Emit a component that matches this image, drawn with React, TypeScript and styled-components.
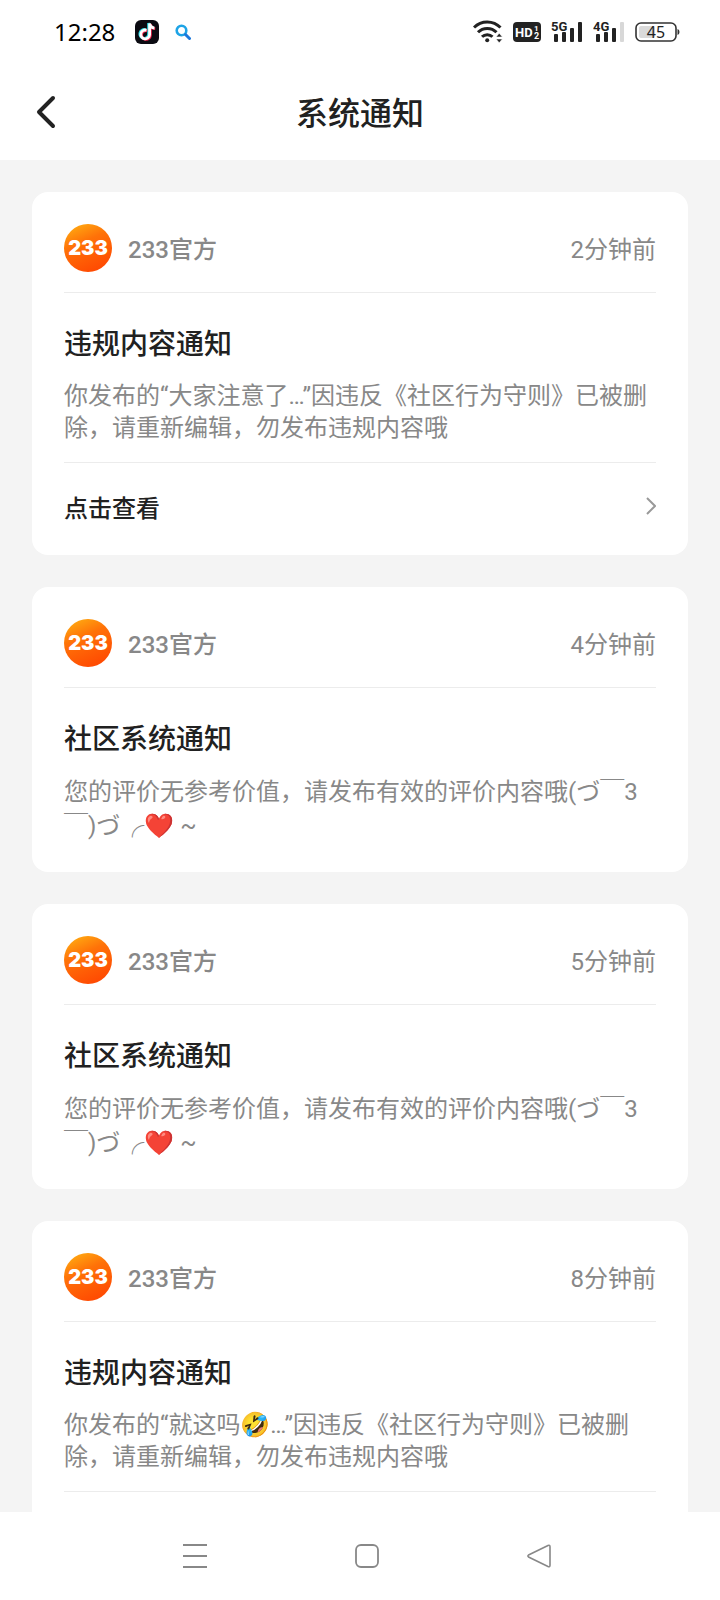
import React from "react";
import styled, { createGlobalStyle } from "styled-components";

const GlobalStyle = createGlobalStyle`
  * { box-sizing: border-box; }
  body {
    margin: 0;
    background: #f4f4f4;
    font-family: Roboto, "Noto Sans CJK SC", "Noto Color Emoji", sans-serif;
    color: #212121;
  }
  button { border: 0; padding: 0; background: none; color: inherit; font: inherit; cursor: pointer; }
  svg { display: block; flex: none; }
  h1, h2, p { margin: 0; }
`;

const Screen = styled.div`
  display: flex;
  flex-direction: column;
  height: 100vh;
`;

const StatusBar = styled.div`
  display: flex;
  align-items: center;
  justify-content: space-between;
  height: 64px;
  padding: 0 40px 0 54px;
  background: #fff;
`;

const StatusGroup = styled.div<{ $gap: number }>`
  display: flex;
  align-items: center;
  gap: ${(p) => p.$gap}px;
`;

const Clock = styled.time`
  margin-right: 4px;
  font: 400 24px/32px "Noto Sans", sans-serif;
  color: #000;
`;

const Header = styled.header`
  display: grid;
  grid-template-columns: 48px 1fr 48px;
  align-items: center;
  height: 96px;
  padding: 0 32px;
  background: #fff;
`;

const BackButton = styled.button`
  display: flex;
  align-items: center;
  height: 48px;
`;

const PageTitle = styled.h1`
  padding-top: 4px;
  font-size: 32px;
  line-height: 48px;
  font-weight: 500;
  text-align: center;
`;

const List = styled.main`
  flex: 1;
  min-height: 0;
  display: flex;
  flex-direction: column;
  gap: 32px;
  padding: 32px;
  overflow-y: auto;
  scrollbar-width: none;
`;

const Card = styled.article`
  flex: none;
  padding: 32px 32px 0;
  border-radius: 16px;
  background: #fff;
`;

const CardHead = styled.div`
  display: flex;
  align-items: center;
  padding-bottom: 20px;
  border-bottom: 1px solid #ececec;
`;

const Sender = styled.span`
  flex: 1;
  margin-left: 16px;
  padding-top: 4px;
  font-size: 24px;
  line-height: 32px;
  font-weight: 500;
  color: #888;
`;

const Ago = styled.time`
  padding-top: 4px;
  font-size: 24px;
  line-height: 32px;
  color: #888;
`;

const CardBody = styled.div<{ $last: boolean }>`
  padding: 32px 0 ${(p) => (p.$last ? 29 : 18)}px;
`;

const CardTitle = styled.h2`
  font-size: 28px;
  line-height: 40px;
  font-weight: 500;
`;

const Message = styled.p<{ $tall: boolean }>`
  margin-top: 15px;
  font-size: 24px;
  line-height: ${(p) => (p.$tall ? 34 : 32)}px;
  color: #888;
`;

const ViewButton = styled.button`
  display: flex;
  align-items: center;
  justify-content: space-between;
  width: 100%;
  height: 93px;
  padding-bottom: 6px;
  border-top: 1px solid #ececec;
  font-size: 24px;
  font-weight: 500;
`;

const NavBar = styled.nav`
  display: flex;
  align-items: center;
  justify-content: space-evenly;
  height: 88px;
  padding: 0 33px 0 47px;
  background: #fff;
`;

const NavButton = styled.button`
  display: grid;
  place-items: center;
  width: 48px;
  height: 48px;
`;

const TikTok = () => (
  <svg width="24" height="24" viewBox="0 0 24 24" aria-hidden="true">
    <rect width="24" height="24" rx="6" fill="#0b0b12" />
    <g fill="none" strokeWidth="2.8">
      <path d="M11.500 10.200a4.400 4.400 0 1 0 3.100 4.400V3.500c.4 2.800 2 4.300 4.800 4.500" stroke="#25d9e6" transform="translate(-1 -.5)" />
      <path d="M11.500 10.200a4.400 4.400 0 1 0 3.100 4.400V3.500c.4 2.800 2 4.300 4.800 4.500" stroke="#f3264f" transform="translate(.8 .6)" />
      <path d="M11.500 10.200a4.400 4.400 0 1 0 3.100 4.400V3.500c.4 2.800 2 4.300 4.800 4.500" stroke="#fff" />
    </g>
  </svg>
);

const SearchGlyph = () => (
  <svg width="16" height="16" viewBox="0 0 16 16" fill="none" aria-hidden="true">
    <circle cx="6.500" cy="6.500" r="4.800" stroke="#1ea4e6" strokeWidth="2.600" />
    <path d="M10.500 10.500l4 4" stroke="#1c78dc" strokeWidth="3" strokeLinecap="round" />
  </svg>
);

const Wifi = () => (
  <svg width="30" height="24" viewBox="0 0 30 24" fill="none" aria-hidden="true">
    <g stroke="#222" strokeWidth="3">
      <path d="M1 7.500a18.500 18.500 0 0 1 26.500 0" />
      <path d="M5 12.300a13 13 0 0 1 18.500 0" />
      <path d="M9 16.800a7.500 7.500 0 0 1 10.500 0" />
    </g>
    <circle cx="14.200" cy="20.300" r="2" fill="#222" />
    <path d="M23 17l3.200-3.800 3.200 3.800zM23 19l3.200 3.800 3.200-3.800z" fill="#222" stroke="#fff" strokeWidth=".6" />
  </svg>
);

const Hd = () => (
  <svg width="28" height="20" viewBox="0 0 28 20" aria-hidden="true">
    <rect width="28" height="20" rx="4" fill="#222" />
    <g fill="#fff" fontFamily="Roboto, sans-serif" fontWeight="700">
      <text x="2" y="15" fontSize="13">HD</text>
      <text x="21" y="9" fontSize="8">1</text>
      <text x="21" y="17" fontSize="9">2</text>
    </g>
  </svg>
);

const Signal = ({ label, bars }: { label: string; bars: number }) => (
  <svg width="32" height="24" viewBox="0 0 32 24" aria-hidden="true">
    {[8, 10, 14, 20].map((h, i) => (
      <rect key={h} x={3 + i * 8} y={22 - h} width="4" height={h} rx="1" fill={i < bars ? "#222" : "#d8d8d8"} />
    ))}
    <text x="0" y="11" fontFamily="Roboto, sans-serif" fontWeight="700" fontSize="13" fill="#222">
      {label}
    </text>
  </svg>
);

const Battery = () => (
  <svg width="45" height="20" viewBox="0 0 45 20" aria-hidden="true">
    <rect x="1" y="1" width="40" height="18" rx="5" fill="#fff" stroke="#333" strokeWidth="1.600" />
    <rect x="4" y="4" width="16" height="12" rx="2" fill="#dadada" />
    <path d="M42.500 7q2 .5 2 3t-2 3z" fill="#333" />
    <text x="21" y="16" textAnchor="middle" fontFamily="Noto Sans, sans-serif" fontSize="16" fill="#222">45</text>
  </svg>
);

const Avatar = () => (
  <svg width="48" height="48" viewBox="0 0 48 48" role="img" aria-label="233">
    <defs>
      <linearGradient id="avatar" x1="0.150" y1="0" x2="0.600" y2="1">
        <stop offset="0" stopColor="#ffae12" />
        <stop offset="0.400" stopColor="#ff7208" />
        <stop offset="1" stopColor="#ff4a02" />
      </linearGradient>
    </defs>
    <circle cx="24" cy="24" r="24" fill="url(#avatar)" />
    <text x="24" y="31" textAnchor="middle" fontFamily="Inter, sans-serif" fontWeight="900" fontSize="20" fill="#fff">233</text>
  </svg>
);

interface Notice {
  ago: string;
  title: string;
  message: string;
  link?: boolean;
}

const notices: Notice[] = [
  { ago: "2分钟前", title: "违规内容通知", message: "你发布的“大家注意了…”因违反《社区行为守则》已被删除，请重新编辑，勿发布违规内容哦", link: true },
  { ago: "4分钟前", title: "社区系统通知", message: "您的评价无参考价值，请发布有效的评价内容哦(づ￣3￣)づ╭❤️ ~" },
  { ago: "5分钟前", title: "社区系统通知", message: "您的评价无参考价值，请发布有效的评价内容哦(づ￣3￣)づ╭❤️ ~" },
  { ago: "8分钟前", title: "违规内容通知", message: "你发布的“就这吗🤣…”因违反《社区行为守则》已被删除，请重新编辑，勿发布违规内容哦", link: true },
];

const NoticeCard = ({ ago, title, message, link }: Notice) => (
  <Card>
    <CardHead>
      <Avatar />
      <Sender>233官方</Sender>
      <Ago>{ago}</Ago>
    </CardHead>
    <CardBody $last={!link}>
      <CardTitle>{title}</CardTitle>
      <Message $tall={!link}>{message}</Message>
    </CardBody>
    {link && (
      <ViewButton type="button">
        点击查看
        <svg width="12" height="20" viewBox="0 0 12 20" fill="none" aria-hidden="true">
          <path d="M3 2l8 8-8 8" stroke="#999" strokeWidth="2" />
        </svg>
      </ViewButton>
    )}
  </Card>
);

export default function App() {
  return (
    <Screen lang="zh-CN">
      <GlobalStyle />
      <StatusBar>
        <StatusGroup $gap={16}>
          <Clock>12:28</Clock>
          <TikTok />
          <SearchGlyph />
        </StatusGroup>
        <StatusGroup $gap={10}>
          <Wifi />
          <Hd />
          <Signal label="5G" bars={4} />
          <Signal label="4G" bars={3} />
          <Battery />
        </StatusGroup>
      </StatusBar>
      <Header>
        <BackButton type="button" aria-label="返回">
          <svg width="28" height="36" viewBox="0 0 28 36" fill="none" aria-hidden="true">
            <path d="M21 4L7 18l14 14" stroke="#222" strokeWidth="4" strokeLinecap="round" strokeLinejoin="round" />
          </svg>
        </BackButton>
        <PageTitle>系统通知</PageTitle>
      </Header>
      <List>
        {notices.map((n) => (
          <NoticeCard key={n.ago} {...n} />
        ))}
      </List>
      <NavBar>
        <NavButton type="button" aria-label="菜单">
          <svg width="24" height="24" viewBox="0 0 24 24" aria-hidden="true">
            <path d="M0 1h24M0 12h24M0 23h24" stroke="#888" strokeWidth="2" />
          </svg>
        </NavButton>
        <NavButton type="button" aria-label="主屏幕">
          <svg width="24" height="24" viewBox="0 0 24 24" fill="none" aria-hidden="true">
            <rect x="1" y="1" width="22" height="22" rx="5" stroke="#888" strokeWidth="1.800" />
          </svg>
        </NavButton>
        <NavButton type="button" aria-label="后退">
          <svg width="24" height="24" viewBox="0 0 24 24" fill="none" aria-hidden="true">
            <path d="M1.500 11L21 1.500q2-.8 2 1.200v18.600q0 2-2 1.200L1.500 13q-1.200-1 0-2z" stroke="#888" strokeWidth="1.600" strokeLinejoin="round" />
          </svg>
        </NavButton>
      </NavBar>
    </Screen>
  );
}
